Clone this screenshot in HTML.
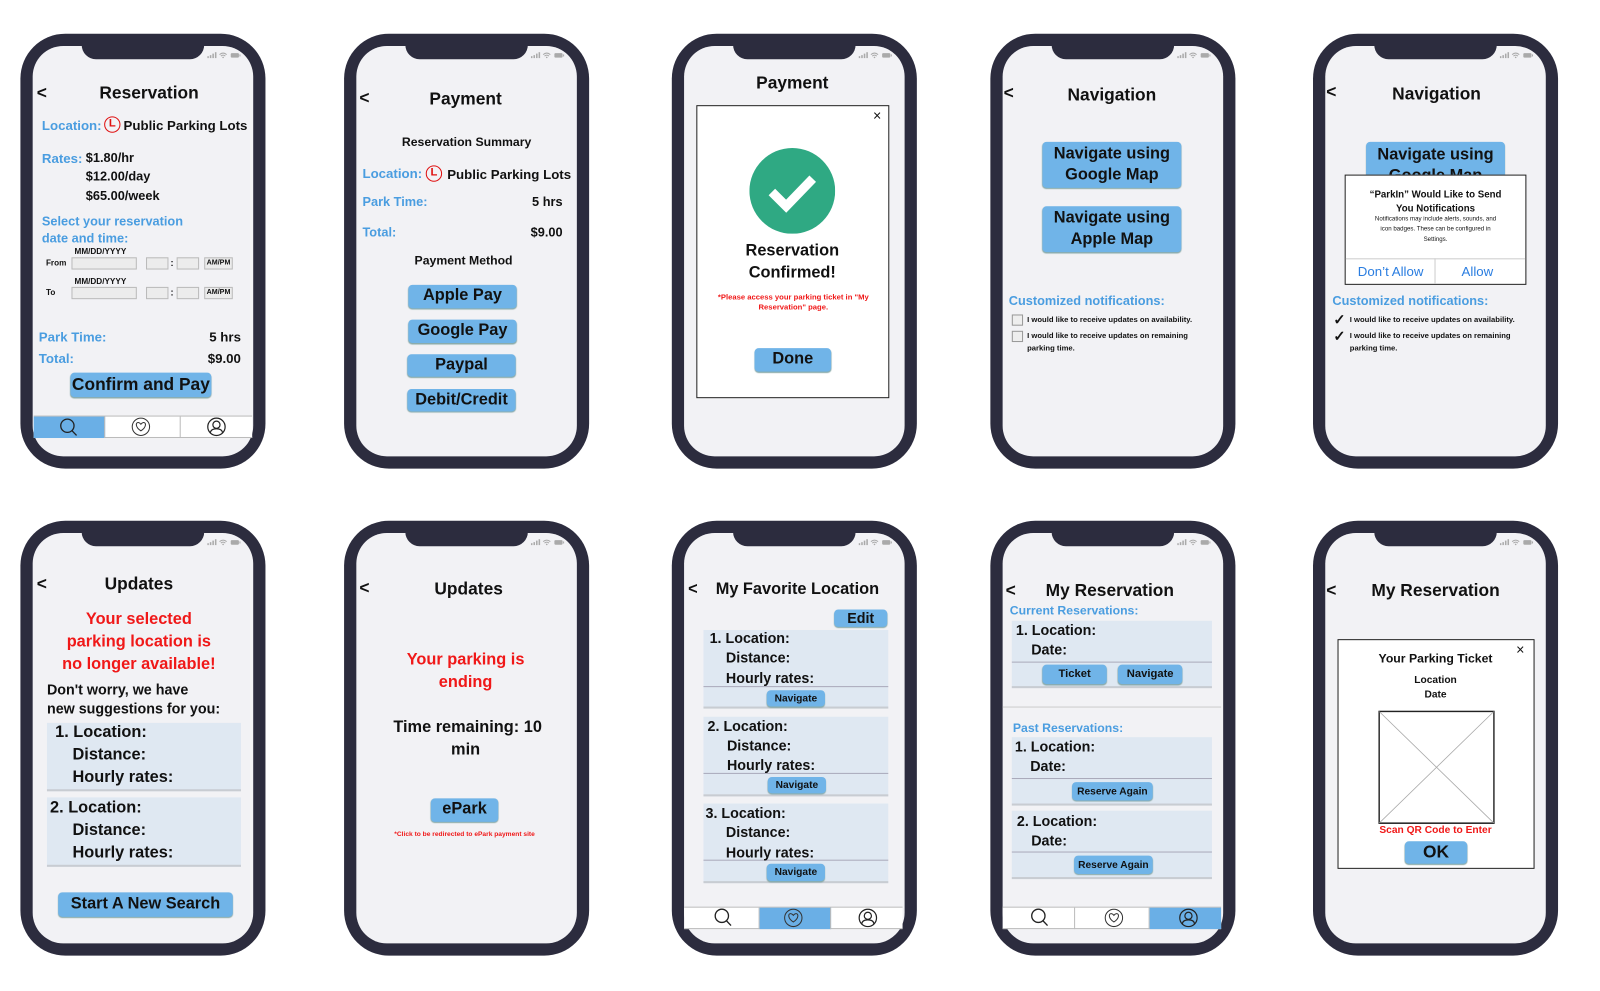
<!DOCTYPE html>
<html><head><meta charset="utf-8"><style>
*{margin:0;padding:0;box-sizing:border-box}
body{width:1600px;height:971px;background:#fff;position:relative;overflow:hidden;font-family:"Liberation Sans",sans-serif;color:#111}
#w{position:absolute;left:0;top:0;width:1600px;height:971px;transform:scale(1.021);transform-origin:0 0}
.ph{position:absolute;width:240px;height:426px;background:#2c2c3e;border-radius:44px}
.sc{position:absolute;left:12px;top:12px;width:216px;height:402px;background:#f2f2f5;border-radius:30px;overflow:hidden}
.no{position:absolute;left:60px;top:10px;width:120px;height:15px;background:#2c2c3e;border-radius:0 0 14px 14px}
.st{position:absolute;left:183px;top:18px;width:36px;height:6px}
.t{position:absolute;white-space:nowrap;font-weight:bold;line-height:1;transform:translateY(-50%)}
.c{transform:translate(-50%,-50%);text-align:center}
.r{transform:translate(-100%,-50%)}
.b{color:#4a9de0}
.red{color:#f01818}
.h{font-size:17px}
.btn{position:absolute;background:#70b4e8;border-radius:4px;display:flex;align-items:center;justify-content:center;font-weight:bold;text-align:center;line-height:1.3;box-shadow:0 1px 1px #8aa}
.box{position:absolute;background:#ececec;border:1px solid #bbb}
.card{position:absolute;background:#dfe8f2;border-bottom:2px solid #c8ccd2}
.ln{position:absolute;height:1px;background:#aab}
.tab{position:absolute;height:22px;background:#fff;border-top:1px solid #bbb;border-bottom:1px solid #bbb}
.tab div{position:absolute;top:0;height:21px;border-right:1px solid #bbb}
.chk{position:absolute;width:11px;height:11px;border:1px solid #999;background:#eee}
.dlg{position:absolute;background:#fff;border:1px solid #222}
.Lc{position:absolute;width:16px;height:16px;border:1.5px solid #e01010;border-radius:50%;color:#e01010;font-size:11px;font-weight:bold;text-align:center;line-height:13px}
</style></head><body>

<svg width="0" height="0" style="position:absolute"><defs>
<g id="st"><rect x="0" y="4" width="1.5" height="2" fill="#aaa"/><rect x="2.5" y="3" width="1.5" height="3" fill="#aaa"/><rect x="5" y="1.5" width="1.5" height="4.5" fill="#aaa"/><rect x="7.5" y="0" width="1.5" height="6" fill="#aaa"/><path d="M12 2.5 Q15.5 -0.5 19 2.5 M13.3 4 Q15.5 2 17.7 4" stroke="#aaa" fill="none" stroke-width="1"/><circle cx="15.5" cy="5.3" r="0.8" fill="#aaa"/><rect x="23" y="1" width="8" height="4.5" rx="1" fill="#aaa"/><rect x="31.5" y="2.3" width="1" height="2" fill="#aaa"/></g>
<g id="srch"><circle cx="9" cy="8" r="6.5" fill="none" stroke="#222" stroke-width="1.3"/><path d="M13.5 12.8 L18 17.5" stroke="#222" stroke-width="1.3"/></g>
<g id="hrt"><circle cx="10" cy="10" r="8.5" fill="none" stroke="#333" stroke-width="1"/><path d="M10 14 C4 10 5 5.5 7.5 5.8 C9 6 10 7.5 10 7.5 C10 7.5 11 6 12.5 5.8 C15 5.5 16 10 10 14Z" fill="none" stroke="#333" stroke-width="1"/></g>
<g id="usr"><circle cx="10" cy="10" r="8.5" fill="none" stroke="#222" stroke-width="1.2"/><circle cx="10" cy="8" r="3.5" fill="none" stroke="#222" stroke-width="1.2"/><path d="M4 16 Q4.5 12 10 12 Q15.5 12 16 16" fill="none" stroke="#222" stroke-width="1.2"/></g>
</defs></svg>

<div id="w">
<div class="ph" style="left:20px;top:33px"><div class="sc"></div><div class="no"></div><svg class="st" viewBox="0 0 36 6"><use href="#st"/></svg></div>
<div class="ph" style="left:337px;top:33px"><div class="sc"></div><div class="no"></div><svg class="st" viewBox="0 0 36 6"><use href="#st"/></svg></div>
<div class="ph" style="left:658px;top:33px"><div class="sc"></div><div class="no"></div><svg class="st" viewBox="0 0 36 6"><use href="#st"/></svg></div>
<div class="ph" style="left:970px;top:33px"><div class="sc"></div><div class="no"></div><svg class="st" viewBox="0 0 36 6"><use href="#st"/></svg></div>
<div class="ph" style="left:1286px;top:33px"><div class="sc"></div><div class="no"></div><svg class="st" viewBox="0 0 36 6"><use href="#st"/></svg></div>
<div class="ph" style="left:20px;top:510px"><div class="sc"></div><div class="no"></div><svg class="st" viewBox="0 0 36 6"><use href="#st"/></svg></div>
<div class="ph" style="left:337px;top:510px"><div class="sc"></div><div class="no"></div><svg class="st" viewBox="0 0 36 6"><use href="#st"/></svg></div>
<div class="ph" style="left:658px;top:510px"><div class="sc"></div><div class="no"></div><svg class="st" viewBox="0 0 36 6"><use href="#st"/></svg></div>
<div class="ph" style="left:970px;top:510px"><div class="sc"></div><div class="no"></div><svg class="st" viewBox="0 0 36 6"><use href="#st"/></svg></div>
<div class="ph" style="left:1286px;top:510px"><div class="sc"></div><div class="no"></div><svg class="st" viewBox="0 0 36 6"><use href="#st"/></svg></div>

<!-- Phone 1 -->
<div class="t h" style="left:36px;top:91px">&lt;</div>
<div class="t c h" style="left:146px;top:91px">Reservation</div>
<div class="t b" style="left:41px;top:123px;font-size:13px">Location:</div>
<div class="Lc" style="left:102px;top:114px">L</div>
<div class="t" style="left:121px;top:123px;font-size:13px">Public Parking Lots</div>
<div class="t b" style="left:41px;top:155px;font-size:13px">Rates:</div>
<div class="t" style="left:84px;top:155px;font-size:12.5px">$1.80/hr</div>
<div class="t" style="left:84px;top:173px;font-size:12.5px">$12.00/day</div>
<div class="t" style="left:84px;top:192px;font-size:12.5px">$65.00/week</div>
<div class="t b" style="left:41px;top:217px;font-size:12.5px">Select your reservation</div>
<div class="t b" style="left:41px;top:234px;font-size:12.5px">date and time:</div>
<div class="t" style="left:73px;top:247px;font-size:8px">MM/DD/YYYY</div>
<div class="t" style="left:45px;top:258px;font-size:8px">From</div>
<div class="box" style="left:70px;top:252px;width:64px;height:12px"></div>
<div class="box" style="left:143px;top:252px;width:22px;height:12px"></div>
<div class="t" style="left:167px;top:258px;font-size:9px">:</div>
<div class="box" style="left:173px;top:252px;width:22px;height:12px"></div>
<div class="box" style="left:200px;top:252px;width:28px;height:12px;font-size:7px;font-weight:bold;line-height:10px;text-align:center">AM/PM</div>
<div class="t" style="left:73px;top:276px;font-size:8px">MM/DD/YYYY</div>
<div class="t" style="left:45px;top:287px;font-size:8px">To</div>
<div class="box" style="left:70px;top:281px;width:64px;height:12px"></div>
<div class="box" style="left:143px;top:281px;width:22px;height:12px"></div>
<div class="t" style="left:167px;top:287px;font-size:9px">:</div>
<div class="box" style="left:173px;top:281px;width:22px;height:12px"></div>
<div class="box" style="left:200px;top:281px;width:28px;height:12px;font-size:7px;font-weight:bold;line-height:10px;text-align:center">AM/PM</div>
<div class="t b" style="left:38px;top:330px;font-size:13px">Park Time:</div>
<div class="t r" style="left:236px;top:330px;font-size:13px">5 hrs</div>
<div class="t b" style="left:38px;top:351px;font-size:13px">Total:</div>
<div class="t r" style="left:236px;top:351px;font-size:13px">$9.00</div>
<div class="btn" style="left:69px;top:365px;width:138px;height:24px;font-size:17px">Confirm and Pay</div>
<div class="tab" style="left:33px;top:407px;width:214px"><div style="left:0;width:70px;background:#6aafe6"></div><div style="left:70px;width:74px"></div></div>
<svg style="position:absolute;left:57px;top:409px" width="20" height="20"><use href="#srch"/></svg>
<svg style="position:absolute;left:128px;top:408px" width="20" height="20"><use href="#hrt"/></svg>
<svg style="position:absolute;left:202px;top:408px" width="20" height="20"><use href="#usr"/></svg>

<!-- Phone 2 -->
<div class="t h" style="left:352px;top:96px">&lt;</div>
<div class="t c h" style="left:456px;top:97px">Payment</div>
<div class="t c" style="left:457px;top:139px;font-size:12px">Reservation Summary</div>
<div class="t b" style="left:355px;top:170px;font-size:13px">Location:</div>
<div class="Lc" style="left:417px;top:162px">L</div>
<div class="t" style="left:438px;top:171px;font-size:13px">Public Parking Lots</div>
<div class="t b" style="left:355px;top:198px;font-size:12.5px">Park Time:</div>
<div class="t r" style="left:551px;top:198px;font-size:12.5px">5 hrs</div>
<div class="t b" style="left:355px;top:228px;font-size:12.5px">Total:</div>
<div class="t r" style="left:551px;top:228px;font-size:12.5px">$9.00</div>
<div class="t c" style="left:454px;top:255px;font-size:12px">Payment Method</div>
<div class="btn" style="left:400px;top:279px;width:106px;height:23px;font-size:16px">Apple Pay</div>
<div class="btn" style="left:400px;top:313px;width:106px;height:23px;font-size:16px">Google Pay</div>
<div class="btn" style="left:399px;top:347px;width:106px;height:22px;font-size:16px">Paypal</div>
<div class="btn" style="left:399px;top:381px;width:106px;height:22px;font-size:16px">Debit/Credit</div>

<!-- Phone 3 -->
<div class="t c h" style="left:776px;top:81px">Payment</div>
<div class="dlg" style="left:682px;top:103px;width:189px;height:287px"></div>
<div class="t" style="left:855px;top:113px;font-size:14px;font-weight:normal">×</div>
<svg style="position:absolute;left:734px;top:145px" width="84" height="84"><circle cx="42" cy="42" r="42" fill="#2fa983"/><path d="M22 43 L36 57 L62 30" stroke="#fff" stroke-width="9" fill="none"/></svg>
<div class="t c" style="left:776px;top:246px;font-size:16px">Reservation</div>
<div class="t c" style="left:776px;top:268px;font-size:16px">Confirmed!</div>
<div class="t c red" style="left:777px;top:291px;font-size:7.5px">*Please access your parking ticket in "My</div>
<div class="t c red" style="left:777px;top:301px;font-size:7.5px">Reservation" page.</div>
<div class="btn" style="left:739px;top:341px;width:75px;height:23px;font-size:16px">Done</div>

<!-- Phone 4 -->
<div class="t h" style="left:983px;top:91px">&lt;</div>
<div class="t c h" style="left:1089px;top:93px">Navigation</div>
<div class="btn" style="left:1021px;top:139px;width:136px;height:45px;font-size:16px">Navigate using<br>Google Map</div>
<div class="btn" style="left:1021px;top:202px;width:136px;height:45px;font-size:16px">Navigate using<br>Apple Map</div>
<div class="t b" style="left:988px;top:295px;font-size:12.5px">Customized notifications:</div>
<div class="chk" style="left:991px;top:308px"></div>
<div class="t" style="left:1006px;top:313px;font-size:7.5px">I would like to receive updates on availability.</div>
<div class="chk" style="left:991px;top:324px"></div>
<div class="t" style="left:1006px;top:329px;font-size:7.5px">I would like to receive updates on remaining</div>
<div class="t" style="left:1006px;top:341px;font-size:7.5px">parking time.</div>

<!-- Phone 5 -->
<div class="t h" style="left:1299px;top:90px">&lt;</div>
<div class="t c h" style="left:1407px;top:92px">Navigation</div>
<div class="btn" style="left:1338px;top:139px;width:136px;height:45px;font-size:16px;align-items:flex-start;padding-top:3px">Navigate using<br>Google Map</div>
<div class="dlg" style="left:1317px;top:171px;width:178px;height:108px"></div>
<div class="t c" style="left:1406px;top:191px;font-size:9.5px">“ParkIn” Would Like to Send</div>
<div class="t c" style="left:1406px;top:205px;font-size:9.5px">You Notifications</div>
<div class="t c" style="left:1406px;top:215px;font-size:6px;font-weight:normal">Notifications may include alerts, sounds, and</div>
<div class="t c" style="left:1406px;top:225px;font-size:6px;font-weight:normal">icon badges. These can be configured in</div>
<div class="t c" style="left:1406px;top:235px;font-size:6px;font-weight:normal">Settings.</div>
<div class="ln" style="left:1318px;top:253px;width:176px;background:#ccc"></div>
<div style="position:absolute;left:1405px;top:253px;width:1px;height:25px;background:#ccc"></div>
<div class="t c" style="left:1362px;top:266px;font-size:13px;font-weight:normal;color:#2a7de0">Don’t Allow</div>
<div class="t c" style="left:1447px;top:266px;font-size:13px;font-weight:normal;color:#2a7de0">Allow</div>
<div class="t b" style="left:1305px;top:295px;font-size:12.5px">Customized notifications:</div>
<div class="t" style="left:1306px;top:313px;font-size:14px">✓</div>
<div class="t" style="left:1322px;top:313px;font-size:7.5px">I would like to receive updates on availability.</div>
<div class="t" style="left:1306px;top:329px;font-size:14px">✓</div>
<div class="t" style="left:1322px;top:329px;font-size:7.5px">I would like to receive updates on remaining</div>
<div class="t" style="left:1322px;top:341px;font-size:7.5px">parking time.</div>

<!-- Phone 6 -->
<div class="t h" style="left:36px;top:572px">&lt;</div>
<div class="t c h" style="left:136px;top:572px">Updates</div>
<div class="t c red" style="left:136px;top:607px;font-size:16px">Your selected</div>
<div class="t c red" style="left:136px;top:629px;font-size:16px">parking location is</div>
<div class="t c red" style="left:136px;top:651px;font-size:16px">no longer available!</div>
<div class="t" style="left:46px;top:675px;font-size:14px">Don't worry, we have</div>
<div class="t" style="left:46px;top:694px;font-size:14px">new suggestions for you:</div>
<div class="card" style="left:46px;top:708px;width:190px;height:67px"></div>
<div class="t" style="left:54px;top:718px;font-size:16px">1. Location:</div>
<div class="t" style="left:71px;top:740px;font-size:16px">Distance:</div>
<div class="t" style="left:71px;top:762px;font-size:16px">Hourly rates:</div>
<div class="card" style="left:46px;top:781px;width:190px;height:68px"></div>
<div class="t" style="left:49px;top:792px;font-size:16px">2. Location:</div>
<div class="t" style="left:71px;top:814px;font-size:16px">Distance:</div>
<div class="t" style="left:71px;top:836px;font-size:16px">Hourly rates:</div>
<div class="btn" style="left:57px;top:874px;width:171px;height:24px;font-size:16px">Start A New Search</div>

<!-- Phone 7 -->
<div class="t h" style="left:352px;top:576px">&lt;</div>
<div class="t c h" style="left:459px;top:577px">Updates</div>
<div class="t c red" style="left:456px;top:647px;font-size:16px">Your parking is</div>
<div class="t c red" style="left:456px;top:669px;font-size:16px">ending</div>
<div class="t c" style="left:458px;top:713px;font-size:16px">Time remaining: 10</div>
<div class="t c" style="left:456px;top:735px;font-size:16px">min</div>
<div class="btn" style="left:422px;top:782px;width:66px;height:23px;font-size:16px">ePark</div>
<div class="t c red" style="left:455px;top:818px;font-size:6.5px">*Click to be redirected to ePark payment site</div>

<!-- Phone 8 -->
<div class="t" style="left:674px;top:578px;font-size:16px">&lt;</div>
<div class="t c" style="left:781px;top:578px;font-size:16px">My Favorite Location</div>
<div class="btn" style="left:817px;top:597px;width:52px;height:17px;font-size:14px">Edit</div>
<div class="card" style="left:689px;top:617px;width:181px;height:77px"></div>
<div class="ln" style="left:689px;top:672px;width:181px"></div>
<div class="t" style="left:695px;top:625px;font-size:14px">1. Location:</div>
<div class="t" style="left:711px;top:644px;font-size:14px">Distance:</div>
<div class="t" style="left:711px;top:664px;font-size:14px">Hourly rates:</div>
<div class="btn" style="left:751px;top:676px;width:57px;height:16px;font-size:10px">Navigate</div>
<div class="card" style="left:689px;top:702px;width:181px;height:78px"></div>
<div class="ln" style="left:689px;top:757px;width:181px"></div>
<div class="t" style="left:693px;top:711px;font-size:14px">2. Location:</div>
<div class="t" style="left:712px;top:730px;font-size:14px">Distance:</div>
<div class="t" style="left:712px;top:749px;font-size:14px">Hourly rates:</div>
<div class="btn" style="left:752px;top:761px;width:57px;height:16px;font-size:10px">Navigate</div>
<div class="card" style="left:689px;top:787px;width:181px;height:78px"></div>
<div class="ln" style="left:689px;top:842px;width:181px"></div>
<div class="t" style="left:691px;top:796px;font-size:14px">3. Location:</div>
<div class="t" style="left:711px;top:815px;font-size:14px">Distance:</div>
<div class="t" style="left:711px;top:835px;font-size:14px">Hourly rates:</div>
<div class="btn" style="left:751px;top:846px;width:57px;height:17px;font-size:10px">Navigate</div>
<div class="tab" style="left:670px;top:888px;width:214px"><div style="left:0;width:74px"></div><div style="left:74px;width:70px;background:#6aafe6"></div></div>
<svg style="position:absolute;left:698px;top:889px" width="20" height="20"><use href="#srch"/></svg>
<svg style="position:absolute;left:767px;top:889px" width="20" height="20"><use href="#hrt"/></svg>
<svg style="position:absolute;left:840px;top:889px" width="20" height="20"><use href="#usr"/></svg>

<!-- Phone 9 -->
<div class="t h" style="left:985px;top:578px">&lt;</div>
<div class="t c h" style="left:1087px;top:578px">My Reservation</div>
<div class="t b" style="left:989px;top:598px;font-size:12px">Current Reservations:</div>
<div class="card" style="left:991px;top:608px;width:196px;height:66px"></div>
<div class="ln" style="left:991px;top:648px;width:196px"></div>
<div class="t" style="left:995px;top:617px;font-size:14px">1. Location:</div>
<div class="t" style="left:1010px;top:636px;font-size:14px">Date:</div>
<div class="btn" style="left:1021px;top:651px;width:63px;height:19px;font-size:11px">Ticket</div>
<div class="btn" style="left:1095px;top:651px;width:63px;height:19px;font-size:11px">Navigate</div>
<div class="ln" style="left:982px;top:692px;width:214px;background:#ccc"></div>
<div class="t b" style="left:992px;top:713px;font-size:12px">Past Reservations:</div>
<div class="card" style="left:991px;top:722px;width:196px;height:67px"></div>
<div class="ln" style="left:991px;top:762px;width:196px"></div>
<div class="t" style="left:994px;top:731px;font-size:14px">1. Location:</div>
<div class="t" style="left:1009px;top:750px;font-size:14px">Date:</div>
<div class="btn" style="left:1050px;top:766px;width:79px;height:18px;font-size:10px">Reserve Again</div>
<div class="card" style="left:991px;top:794px;width:196px;height:67px"></div>
<div class="ln" style="left:991px;top:834px;width:196px"></div>
<div class="t" style="left:996px;top:804px;font-size:14px">2. Location:</div>
<div class="t" style="left:1010px;top:823px;font-size:14px">Date:</div>
<div class="btn" style="left:1052px;top:838px;width:77px;height:18px;font-size:10px">Reserve Again</div>
<div class="tab" style="left:982px;top:888px;width:214px"><div style="left:0;width:71px"></div><div style="left:71px;width:73px"></div><div style="left:144px;width:70px;background:#6aafe6;border:none"></div></div>
<svg style="position:absolute;left:1008px;top:889px" width="20" height="20"><use href="#srch"/></svg>
<svg style="position:absolute;left:1081px;top:889px" width="20" height="20"><use href="#hrt"/></svg>
<svg style="position:absolute;left:1154px;top:889px" width="20" height="20"><use href="#usr"/></svg>

<!-- Phone 10 -->
<div class="t h" style="left:1299px;top:578px">&lt;</div>
<div class="t c h" style="left:1406px;top:578px">My Reservation</div>
<div class="dlg" style="left:1310px;top:626px;width:193px;height:225px"></div>
<div class="t" style="left:1485px;top:636px;font-size:14px;font-weight:normal">×</div>
<div class="t c" style="left:1406px;top:645px;font-size:12px">Your Parking Ticket</div>
<div class="t c" style="left:1406px;top:667px;font-size:10px">Location</div>
<div class="t c" style="left:1406px;top:681px;font-size:10px">Date</div>
<svg style="position:absolute;left:1350px;top:696px" width="114" height="111"><rect x="0.75" y="0.75" width="112.5" height="109.5" fill="#fff" stroke="#222" stroke-width="1.5"/><path d="M1 1 L113 110 M113 1 L1 110" stroke="#aaa" stroke-width="0.8"/></svg>
<div class="t c red" style="left:1406px;top:814px;font-size:10px">Scan QR Code to Enter</div>
<div class="btn" style="left:1376px;top:824px;width:61px;height:22px;font-size:17px">OK</div>
</div>
</body></html>
